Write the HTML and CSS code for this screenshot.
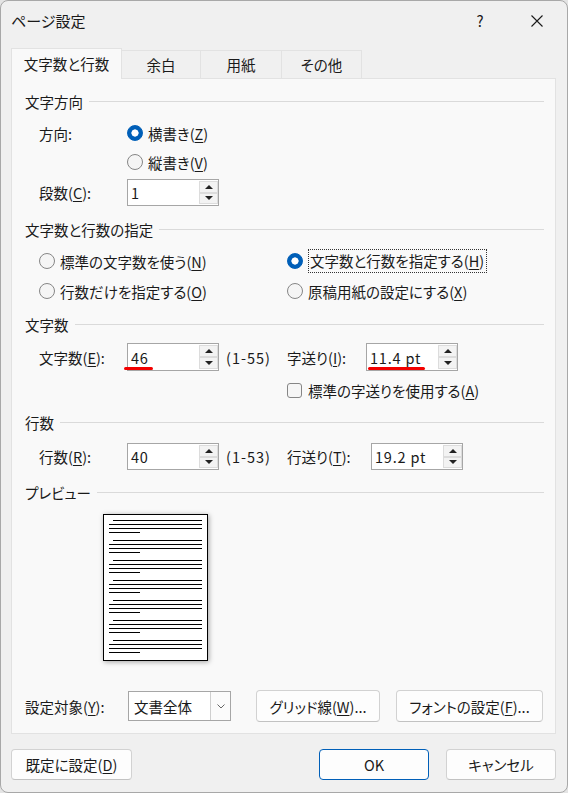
FILE: index.html
```html
<!DOCTYPE html>
<html lang="ja">
<head>
    <meta charset="UTF-8">
    <title>ページ設定</title>
    <link rel="stylesheet" href="styles.css">
</head>
<body>
<div class="dialog">

    <div class="titlebar">
        <span class="title">ページ設定</span>
        <span class="help">?</span>
        <span class="close">
            <svg width="12" height="12" viewBox="0 0 12 12"><path d="M0.5 0.5L11.5 11.5M11.5 0.5L0.5 11.5" stroke="#1a1a1a" stroke-width="1.1" fill="none"/></svg>
        </span>
    </div>

    <div class="tabs">
        <div class="tab active">文字数と行数</div>
        <div class="tab t-margin">余白</div>
        <div class="tab t-paper">用紙</div>
        <div class="tab t-other">その他</div>
    </div>

    <div class="panel">
        <div class="group-title">文字方向</div>
        <div class="row r-dir">
            <span class="label">方向:</span>
            <span class="opt"><i class="radio on"></i>横書き(<u>Z</u>)</span>
        </div>
        <div class="row r-vert">
            <span class="opt"><i class="radio"></i>縦書き(<u>V</u>)</span>
        </div>
        <div class="row r-cols">
            <span class="label">段数(<u>C</u>):</span>
            <span class="spin"><span class="val">1</span><span class="arrows"><b><i class="up"></i></b><b><i class="down"></i></b></span></span>
        </div>

        <div class="group-title gt-grid">文字数と行数の指定</div>
        <div class="row r-opt1">
            <span class="opt col-left"><i class="radio"></i>標準の文字数を使う(<u>N</u>)</span>
            <span class="opt"><i class="radio on"></i><span class="focus">文字数と行数を指定する(<u>H</u>)</span></span>
        </div>
        <div class="row r-opt2">
            <span class="opt col-left"><i class="radio"></i>行数だけを指定する(<u>O</u>)</span>
            <span class="opt"><i class="radio"></i>原稿用紙の設定にする(<u>X</u>)</span>
        </div>

        <div class="group-title gt-chars">文字数</div>
        <div class="row r-chars">
            <span class="label">文字数(<u>E</u>):</span>
            <span class="spin"><span class="val">46</span><span class="arrows"><b><i class="up"></i></b><b><i class="down"></i></b></span><span class="mark mark-chars"></span></span>
            <span class="range">(1-55)</span>
            <span class="label2">字送り(<u>I</u>):</span>
            <span class="spin"><span class="val">11.4 pt</span><span class="arrows"><b><i class="up"></i></b><b><i class="down"></i></b></span><span class="mark mark-pitch"></span></span>
        </div>
        <div class="row r-check">
            <span class="opt"><i class="check"></i>標準の字送りを使用する(<u>A</u>)</span>
        </div>

        <div class="group-title gt-lines">行数</div>
        <div class="row r-lines">
            <span class="label">行数(<u>R</u>):</span>
            <span class="spin"><span class="val">40</span><span class="arrows"><b><i class="up"></i></b><b><i class="down"></i></b></span></span>
            <span class="range">(1-53)</span>
            <span class="label2 wide">行送り(<u>T</u>):</span>
            <span class="spin"><span class="val">19.2 pt</span><span class="arrows"><b><i class="up"></i></b><b><i class="down"></i></b></span></span>
        </div>

        <div class="group-title gt-preview">プレビュー</div>
        <div class="preview">
            <div class="page">
                <svg width="103" height="145" viewBox="0 0 103 145">
                    <defs>
                        <g id="para" stroke="#000" stroke-width="1">
                            <path d="M9 5.5H98M5 9.5H98M5 13.5H98M5 17.5H36"/>
                        </g>
                    </defs>
                    <use href="#para"/>
                    <use href="#para" y="20"/>
                    <use href="#para" y="40"/>
                    <use href="#para" y="60"/>
                    <use href="#para" y="80"/>
                    <use href="#para" y="100"/>
                    <use href="#para" y="120"/>
                </svg>
            </div>
        </div>

        <div class="bottom">
            <span class="label-apply">設定対象(<u>Y</u>):</span>
            <span class="select">
                <span class="sel-text">文書全体</span>
                <span class="drop"><svg width="8" height="5" viewBox="0 0 8 5"><path d="M0.5 0.5L4 4L7.5 0.5" stroke="#666" fill="none"/></svg></span>
            </span>
            <button class="btn btn-grid">グリッド線(<u>W</u>)...</button>
            <button class="btn btn-font">フォントの設定(<u>F</u>)...</button>
        </div>
    </div>

    <div class="footer">
        <button class="btn btn-default">既定に設定(<u>D</u>)</button>
        <button class="btn btn-ok">OK</button>
        <button class="btn btn-cancel">キャンセル</button>
    </div>

</div>
</body>
</html>
```

FILE: styles.css
```css
html, body {
    margin: 0;
    background: #e4e4e4;
}

body {
    font-family: "Noto Sans CJK JP", "Noto Sans", sans-serif;
    font-size: 14.5px;
    font-feature-settings: "palt";
    color: #1a1a1a;
}

u {
    text-decoration-thickness: 1px;
    text-underline-offset: 2px;
}

.dialog {
    width: 568px;
    height: 793px;
    box-sizing: border-box;
    background: #f0f0f0;
    border: 1px solid #a8a8a8;
    border-radius: 8px;
    overflow: hidden;
}

/* title bar */
.titlebar {
    height: 39px;
    display: flex;
    align-items: center;
    padding-left: 10px;
    padding-right: 7px;
    font-size: 15px;
}

.title {
    flex: 1;
}

.help, .close {
    width: 46px;
    display: flex;
    justify-content: center;
    align-items: center;
}

.help {
    margin-right: 11px;
}

/* tabs */
.tabs {
    display: flex;
    align-items: flex-end;
    height: 30px;
    margin-top: 8px;
    margin-left: 10px;
}

.tab {
    height: 28px;
    box-sizing: border-box;
    display: flex;
    align-items: center;
    justify-content: center;
    border: 1px solid #e2e2e2;
    border-bottom: none;
    border-left: none;
    background: #f0f0f0;
}

.tab.active {
    width: 111px;
    height: 31px;
    margin-bottom: -1px;
    border-left: 1px solid #e2e2e2;
    background: #f9f9f9;
    position: relative;
    z-index: 1;
    padding-bottom: 2px;
}

.t-margin { width: 79px; }
.t-paper { width: 81px; }
.t-other { width: 80px; }

/* panel */
.panel {
    margin-left: 10px;
    width: 545px;
    box-sizing: border-box;
    background: #f9f9f9;
    border: 1px solid #e2e2e2;
    padding: 12px 11px 11px 13px;
}

.group-title {
    height: 20px;
    display: flex;
    align-items: center;
    gap: 6px;
}

.group-title::after {
    content: "";
    flex: 1;
    border-top: 1px solid #dadada;
}

.gt-grid { margin-top: 13px; }
.gt-chars { margin-top: 11px; }
.gt-lines { margin-top: 10px; }
.gt-preview { margin-top: 12px; }

.row {
    display: flex;
    align-items: center;
    padding-left: 14px;
}

.label {
    width: 88px;
}

.r-dir { height: 24px; margin-top: 10px; }
.r-vert { height: 24px; margin-top: 5px; padding-left: 102px; }
.r-cols { height: 27px; margin-top: 5px; }
.r-opt1 { height: 24px; margin-top: 10px; }
.r-opt2 { height: 24px; margin-top: 6px; }
.r-chars { height: 28px; margin-top: 9px; }
.r-check { height: 24px; margin-top: 7px; padding-left: 262px; }
.r-lines { height: 27px; margin-top: 11px; }

.opt {
    display: flex;
    align-items: center;
    white-space: nowrap;
}

.col-left {
    width: 248px;
}

.radio {
    width: 16px;
    height: 16px;
    box-sizing: border-box;
    border-radius: 50%;
    border: 1px solid #868686;
    background: #f5f5f5;
    margin-right: 5px;
}

.radio.on {
    border-color: #005fb8;
    background: radial-gradient(circle, #fff 0 3.3px, #005fb8 3.9px);
}

.check {
    width: 15px;
    height: 15px;
    box-sizing: border-box;
    border: 1px solid #868686;
    border-radius: 3px;
    background: #f6f6f6;
    margin-right: 6px;
}

.focus {
    border: 1px dotted #333;
    padding: 0 2px 1px 1px;
}

/* spin boxes */
.spin {
    width: 92px;
    height: 100%;
    box-sizing: border-box;
    display: flex;
    align-items: center;
    border: 1px solid #a6a6a6;
    background: #fff;
    padding-left: 3px;
    position: relative;
}

.val {
    flex: 1;
    letter-spacing: 0.8px;
}

.arrows {
    width: 19px;
    height: 100%;
    box-sizing: border-box;
    display: flex;
    flex-direction: column;
    padding: 1px 0;
}

.arrows b {
    flex: 1;
    display: flex;
    align-items: center;
    justify-content: center;
    border: 1px solid #dcdcdc;
    background: #f3f3f3;
}

.up, .down {
    width: 0;
    height: 0;
    border-left: 4px solid transparent;
    border-right: 4px solid transparent;
}

.up { border-bottom: 4px solid #222; }
.down { border-top: 4px solid #222; }

.mark {
    position: absolute;
    top: 23px;
    height: 3px;
    border-radius: 2px;
    background: #f20000;
}

.mark-chars { left: -4px; width: 29px; }
.mark-pitch { left: 1px; width: 57px; }

.range {
    width: 61px;
    margin-left: 7px;
    letter-spacing: 1px;
}

.label2 {
    width: 79px;
}

.label2.wide {
    width: 84px;
}

/* preview */
.preview {
    margin-top: 12px;
    padding-left: 78px;
}

.page {
    width: 105px;
    height: 147px;
    box-sizing: border-box;
    border: 1px solid #000;
    background: #fff;
    box-shadow: 1px 1px 5px rgba(0, 0, 0, 0.35);
}

.page svg {
    display: block;
}

/* apply-to row */
.bottom {
    display: flex;
    align-items: center;
    height: 32px;
    margin-top: 29px;
}

.label-apply {
    width: 103px;
}

.select {
    width: 103px;
    height: 30px;
    box-sizing: border-box;
    display: flex;
    align-items: center;
    border: 1px solid #a6a6a6;
    background: #fff;
    padding-left: 5px;
}

.sel-text {
    flex: 1;
}

.drop {
    width: 20px;
    height: 100%;
    box-sizing: border-box;
    display: flex;
    align-items: center;
    justify-content: center;
    border-left: 1px solid #cfcfcf;
    background: #fbfbfb;
}

.btn {
    font: inherit;
    color: inherit;
    height: 32px;
    box-sizing: border-box;
    background: #fdfdfd;
    border: 1px solid #d2d2d2;
    border-bottom-color: #c2c2c2;
    border-radius: 4px;
    padding: 0;
    white-space: nowrap;
}

.btn-grid { width: 124px; margin-left: 25px; }
.btn-font { width: 147px; margin-left: 16px; }

/* footer */
.footer {
    display: flex;
    margin-top: 15px;
    padding: 0 11px 0 10px;
}

.footer .btn {
    height: 31px;
}

.btn-default { width: 121px; }

.btn-ok {
    width: 110px;
    margin-left: auto;
    border-color: #005fb8;
}

.btn-cancel {
    width: 110px;
    margin-left: 17px;
}
```
